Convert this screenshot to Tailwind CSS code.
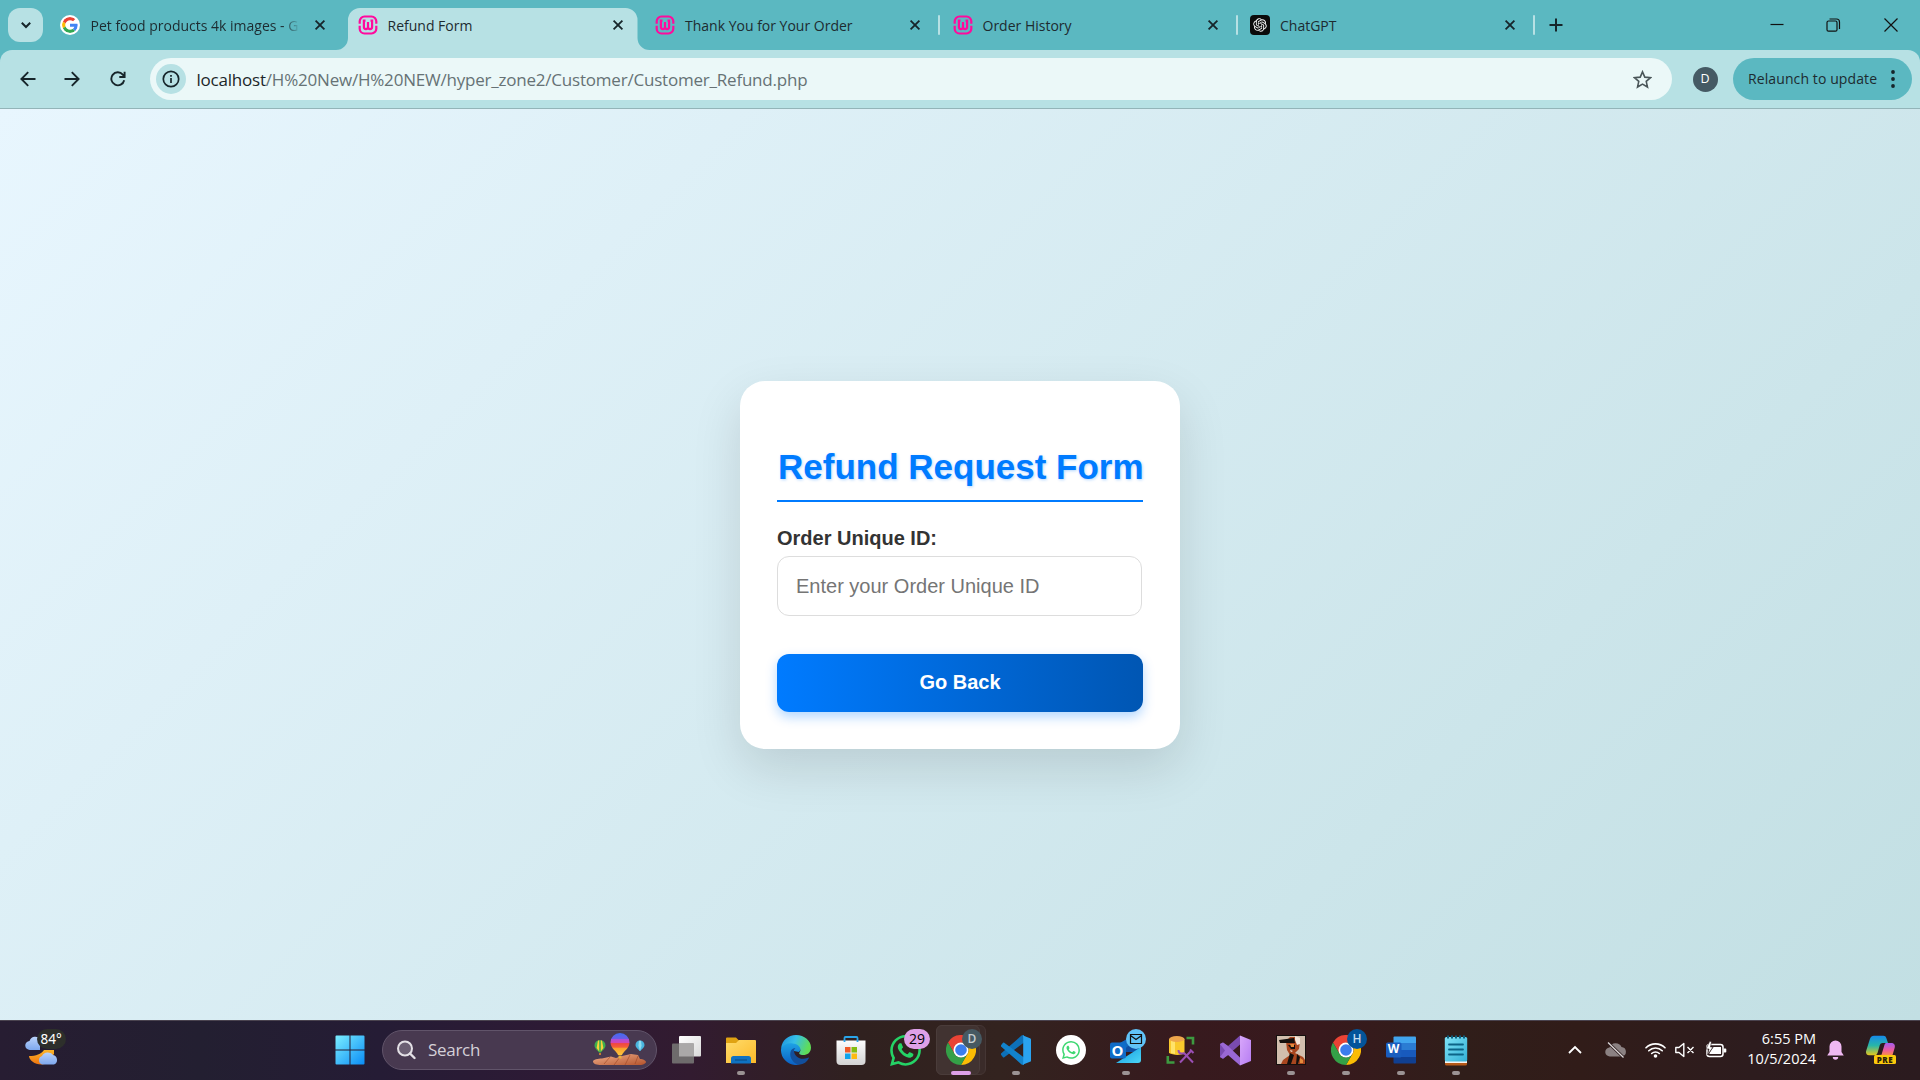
<!DOCTYPE html>
<html lang="en">
<head>
<meta charset="utf-8">
<title>Refund Form</title>
<script src="https://cdn.jsdelivr.net/npm/@tailwindcss/browser@4"></script>
</head>
<body class="w-[1920px] h-[1080px] overflow-hidden flex flex-col font-['Open_Sans',sans-serif] text-[#1d2b30]">

<svg class="absolute size-0">
  <defs>
    <linearGradient id="win" x1="0" y1="0" x2="1" y2="1"><stop offset="0" stop-color="#7beeff"/><stop offset="1" stop-color="#0a8cf5"/></linearGradient>
    <linearGradient id="tv" x1="0" y1="0" x2="1" y2="1"><stop offset="0" stop-color="#fff"/><stop offset="1" stop-color="#d9d9d9"/></linearGradient>
    <linearGradient id="folder" x1="0" y1="0" x2="1" y2="1"><stop offset="0" stop-color="#ffdc6b"/><stop offset="1" stop-color="#fbb929"/></linearGradient>
    <linearGradient id="edgeA" x1="0" y1="0" x2="1" y2=".3"><stop offset="0" stop-color="#1c8fdc"/><stop offset=".5" stop-color="#36bfe8"/><stop offset="1" stop-color="#5fdc58"/></linearGradient>
    <linearGradient id="edgeB" x1="0" y1="0" x2="0" y2="1"><stop offset="0" stop-color="#1fa6e6"/><stop offset="1" stop-color="#0b60c4"/></linearGradient>
    <linearGradient id="store" x1="0" y1="0" x2="0" y2="1"><stop offset="0" stop-color="#fdfdfd"/><stop offset="1" stop-color="#d3d3d3"/></linearGradient>
    <linearGradient id="vs" x1="0" y1="0" x2="1" y2="1"><stop offset="0" stop-color="#d9a8fb"/><stop offset="1" stop-color="#b67df2"/></linearGradient>
    <linearGradient id="outl" x1="0" y1="0" x2="1" y2="1"><stop offset="0" stop-color="#1496dd"/><stop offset="1" stop-color="#4bd6f7"/></linearGradient>
    <linearGradient id="note" x1="0" y1="0" x2="1" y2="1"><stop offset="0" stop-color="#7fe3f7"/><stop offset="1" stop-color="#33b0d6"/></linearGradient>
    <linearGradient id="copA" x1="0" y1="0" x2="0" y2="1"><stop offset="0" stop-color="#168bea"/><stop offset=".5" stop-color="#28b6a8"/><stop offset="1" stop-color="#e6c61c"/></linearGradient>
    <linearGradient id="copB" x1="0" y1="0" x2="0" y2="1"><stop offset="0" stop-color="#a35cf0"/><stop offset=".6" stop-color="#ee5c9c"/><stop offset="1" stop-color="#f98a4b"/></linearGradient>
    <linearGradient id="balloon" x1="0" y1="0" x2="0" y2="1"><stop offset="0" stop-color="#3f6df0"/><stop offset=".25" stop-color="#6a5de8"/><stop offset=".28" stop-color="#b04fd6"/><stop offset=".45" stop-color="#d246b4"/><stop offset=".48" stop-color="#f0483f"/><stop offset=".65" stop-color="#f4603a"/><stop offset=".68" stop-color="#f9a02c"/><stop offset="1" stop-color="#fcc43c"/></linearGradient>
    <linearGradient id="rock" x1="0" y1="0" x2="1" y2="1"><stop offset="0" stop-color="#f2b08c"/><stop offset="1" stop-color="#b4532c"/></linearGradient>
    <linearGradient id="moon" x1="0" y1="0" x2="0" y2="1"><stop offset="0" stop-color="#fbb62a"/><stop offset="1" stop-color="#f0740f"/></linearGradient>
    <linearGradient id="cloud" x1="0" y1="0" x2="0" y2="1"><stop offset="0" stop-color="#b9d2fa"/><stop offset="1" stop-color="#7ea8ee"/></linearGradient>
    <symbol id="wamp" viewBox="0 0 20 20">
      <g fill="none" stroke="#ff0a9d" stroke-width="2.200">
        <path d="M1.700 8.700V6.300A4.800 4.800 0 0 1 6.500 1.500h7a4.800 4.800 0 0 1 4.800 4.800V8.700M1.700 10.800v2.900a4.800 4.800 0 0 0 4.800 4.800h7a4.800 4.800 0 0 0 4.800-4.800V10.800"/>
        <path d="M7.500 5.600H5.900V12a2.050 2.050 0 0 0 4.100 0V7M10 12a2.050 2.050 0 0 0 4.100 0V5.600h-1.600"/>
      </g>
    </symbol>
    <symbol id="x" viewBox="0 0 12 12"><path d="M1.600 1.600l8.800 8.800M10.400 1.600l-8.800 8.800" stroke="#16252a" stroke-width="1.800" fill="none"/></symbol>
    <symbol id="chrome" viewBox="0 0 30 30">
      <path fill="#ea4335" d="M2 7.500A15 15 0 0 1 28 7.500H15L8.500 18.800z"/>
      <path fill="#fbbc04" d="M28 7.500A15 15 0 0 1 15 30l6.500-11.200A7.500 7.500 0 0 0 15 7.500z"/>
      <path fill="#34a047" d="M2 7.500A15 15 0 0 0 15 30l6.500-11.200A7.500 7.500 0 0 1 8.500 18.800z"/>
      <circle cx="15" cy="15" r="7.500" fill="#fff"/><circle cx="15" cy="15" r="5.800" fill="#3b7ded"/>
    </symbol>
    <symbol id="wa" viewBox="0 0 24 24"><path d="M17.472 14.382c-.297-.149-1.758-.867-2.03-.967-.273-.099-.471-.148-.67.15-.197.297-.767.966-.94 1.164-.173.199-.347.223-.644.075-.297-.15-1.255-.463-2.39-1.475-.883-.788-1.48-1.761-1.653-2.059-.173-.297-.018-.458.13-.606.134-.133.298-.347.446-.52.149-.174.198-.298.298-.497.099-.198.05-.371-.025-.52-.075-.149-.669-1.612-.916-2.207-.242-.579-.487-.5-.669-.51-.173-.008-.371-.01-.57-.01-.198 0-.52.074-.792.372-.272.297-1.04 1.016-1.04 2.479 0 1.462 1.065 2.875 1.213 3.074.149.198 2.096 3.2 5.077 4.487.709.306 1.262.489 1.694.625.712.227 1.36.195 1.871.118.571-.085 1.758-.719 2.006-1.413.248-.694.248-1.289.173-1.413-.074-.124-.272-.198-.57-.347m-5.421 7.403h-.004a9.87 9.87 0 01-5.031-1.378l-.361-.214-3.741.982.998-3.648-.235-.374a9.86 9.86 0 01-1.51-5.26c.001-5.45 4.436-9.884 9.888-9.884 2.64 0 5.122 1.03 6.988 2.898a9.825 9.825 0 012.893 6.994c-.003 5.45-4.437 9.884-9.885 9.884m8.413-18.297A11.815 11.815 0 0012.05 0C5.495 0 .16 5.335.157 11.892c0 2.096.547 4.142 1.588 5.945L.057 24l6.305-1.654a11.882 11.882 0 005.683 1.448h.005c6.554 0 11.89-5.335 11.893-11.893a11.821 11.821 0 00-3.48-8.413z"/></symbol>
  </defs>
</svg>

<!-- Tab strip -->
<header class="h-[50px] shrink-0 bg-[#5bb8c1] flex text-[14px] leading-[20px]">
  <div class="w-[50.5px] pl-2 pt-2 shrink-0">
    <div class="w-[35px] h-[34px] rounded-xl bg-[#b7e1e4] grid place-items-center">
      <svg class="size-[12px]" viewBox="0 0 12 12"><path d="M1.800 3.800L6 8l4.200-4.200" fill="none" stroke="#16252a" stroke-width="2"/></svg>
    </div>
  </div>
  <div class="flex gap-2 pt-[8px]">
    <div class="w-[289.5px] h-[34px] flex items-center pl-[9.5px] pr-[14px]">
      <svg class="size-5 shrink-0 rounded-full bg-white p-[2px]" viewBox="0 0 48 48"><path fill="#EA4335" d="M24 9.5c3.54 0 6.71 1.22 9.21 3.6l6.85-6.85C35.9 2.38 30.47 0 24 0 14.62 0 6.51 5.38 2.56 13.22l7.98 6.19C12.43 13.72 17.74 9.5 24 9.5z"/><path fill="#4285F4" d="M46.98 24.55c0-1.57-.15-3.09-.38-4.55H24v9.02h12.94c-.58 2.96-2.26 5.48-4.78 7.18l7.73 6c4.51-4.18 7.09-10.36 7.09-17.65z"/><path fill="#FBBC05" d="M10.53 28.59c-.48-1.45-.76-2.99-.76-4.59s.27-3.14.76-4.59l-7.98-6.19C.92 16.46 0 20.12 0 24c0 3.88.92 7.54 2.56 10.78l7.97-6.19z"/><path fill="#34A853" d="M24 48c6.48 0 11.93-2.13 15.89-5.81l-7.73-6c-2.15 1.45-4.92 2.3-8.16 2.3-6.26 0-11.57-4.22-13.47-9.91l-7.98 6.19C6.51 42.62 14.62 48 24 48z"/></svg>
      <span class="ml-[10.5px] pt-px w-[209px] overflow-hidden whitespace-nowrap [mask-image:linear-gradient(to_right,black_92%,transparent_100%)]">Pet food products 4k images - G</span>
      <svg class="size-3 ml-auto"><use href="#x"/></svg>
    </div>
    <div class="relative w-[289.5px] h-[34px] flex items-center pl-[10px] pr-[14px]">
      <svg class="absolute -left-3 top-0 w-[314px] h-[42px]" viewBox="0 0 314 42"><path fill="#b7e1e4" d="M0 42a12 12 0 0 0 12-12V12A12 12 0 0 1 24 0H289.500a12 12 0 0 1 12 12V30a12 12 0 0 0 12 12z"/></svg>
      <svg class="relative size-5"><use href="#wamp"/></svg>
      <span class="relative ml-[9.5px] pt-px">Refund Form</span>
      <svg class="relative size-3 ml-auto"><use href="#x"/></svg>
    </div>
    <div class="relative w-[289.5px] h-[34px] flex items-center pl-[9.5px] pr-[14px]">
      <svg class="size-5"><use href="#wamp"/></svg>
      <span class="ml-[10px] pt-px">Thank You for Your Order</span>
      <svg class="size-3 ml-auto"><use href="#x"/></svg>
      <i class="absolute -right-[5px] top-[7px] w-[2px] h-5 rounded bg-[#b7e1e4]"></i>
    </div>
    <div class="relative w-[289.5px] h-[34px] flex items-center pl-[10px] pr-[14px]">
      <svg class="size-5"><use href="#wamp"/></svg>
      <span class="ml-[9.5px] pt-px">Order History</span>
      <svg class="size-3 ml-auto"><use href="#x"/></svg>
      <i class="absolute -right-[5px] top-[7px] w-[2px] h-5 rounded bg-[#b7e1e4]"></i>
    </div>
    <div class="relative w-[289.5px] h-[34px] flex items-center pl-[9px] pr-[14px]">
      <svg class="size-5" viewBox="0 0 40 40"><rect width="40" height="40" rx="8" fill="#0b0b0b"/><g transform="translate(6.500 6.500) scale(1.125)"><path fill="#fff" d="M22.2819 9.8211a5.9847 5.9847 0 0 0-.5157-4.9108 6.0462 6.0462 0 0 0-6.5098-2.9A6.0651 6.0651 0 0 0 4.9807 4.1818a5.9847 5.9847 0 0 0-3.9977 2.9 6.0462 6.0462 0 0 0 .7427 7.0966 5.98 5.98 0 0 0 .511 4.9107 6.051 6.051 0 0 0 6.5146 2.9001A5.9847 5.9847 0 0 0 13.2599 24a6.0557 6.0557 0 0 0 5.7718-4.2058 5.9894 5.9894 0 0 0 3.9977-2.9001 6.0557 6.0557 0 0 0-.7475-7.0729zm-9.022 12.6081a4.4755 4.4755 0 0 1-2.8764-1.0408l.1419-.0804 4.7783-2.7582a.7948.7948 0 0 0 .3927-.6813v-6.7369l2.02 1.1686a.071.071 0 0 1 .038.052v5.5826a4.504 4.504 0 0 1-4.4945 4.4944zm-9.6607-4.1254a4.4708 4.4708 0 0 1-.5346-3.0137l.142.0852 4.783 2.7582a.7712.7712 0 0 0 .7806 0l5.8428-3.3685v2.3324a.0804.0804 0 0 1-.0332.0615L9.74 19.9502a4.4992 4.4992 0 0 1-6.1408-1.6464zM2.3408 7.8956a4.485 4.485 0 0 1 2.3655-1.9728V11.6a.7664.7664 0 0 0 .3879.6765l5.8144 3.3543-2.0201 1.1685a.0757.0757 0 0 1-.071 0l-4.8303-2.7865A4.504 4.504 0 0 1 2.3408 7.872zm16.5963 3.8558L13.1038 8.364 15.1192 7.2a.0757.0757 0 0 1 .071 0l4.8303 2.7913a4.4944 4.4944 0 0 1-.6765 8.1042v-5.6772a.79.79 0 0 0-.407-.667zm2.0107-3.0231l-.142-.0852-4.7735-2.7818a.7759.7759 0 0 0-.7854 0L9.409 9.2297V6.8974a.0662.0662 0 0 1 .0284-.0615l4.8303-2.7866a4.4992 4.4992 0 0 1 6.6802 4.66zM8.3065 12.863l-2.02-1.1638a.0804.0804 0 0 1-.038-.0567V6.0742a4.4992 4.4992 0 0 1 7.3757-3.4537l-.142.0805L8.704 5.459a.7948.7948 0 0 0-.3927.6813zm1.0976-2.3654l2.602-1.4998 2.6069 1.4998v2.9994l-2.5974 1.4997-2.6067-1.4997Z"/></g></svg>
      <span class="ml-[10.5px] pt-px">ChatGPT</span>
      <svg class="size-3 ml-auto"><use href="#x"/></svg>
      <i class="absolute -right-[5px] top-[7px] w-[2px] h-5 rounded bg-[#b7e1e4]"></i>
    </div>
  </div>
  <svg class="w-[14px] h-[14px] mt-[18px] ml-[18.5px]" viewBox="0 0 14 14"><path d="M7 .5v13M.5 7h13" stroke="#16252a" stroke-width="2"/></svg>
  <div class="ml-auto flex h-[50px] items-center">
    <svg class="w-[56px] h-[14px]" viewBox="0 0 56 14"><path d="M21.500 6.500h13" stroke="#111" stroke-width="1.200"/></svg>
    <svg class="w-[57px] h-[14px]" viewBox="0 0 57 14"><g fill="none" stroke="#111" stroke-width="1.200"><rect x="22" y="3" width="10" height="10.200" rx="1.500"/><path d="M24.500 1h7a3 3 0 0 1 3 3v7"/></g></svg>
    <svg class="w-[58px] h-[14px]" viewBox="0 0 58 14"><path d="M22.500 .5l13 13M35.500 .5l-13 13" stroke="#111" stroke-width="1.200"/></svg>
  </div>
</header>

<!-- Toolbar -->
<div class="h-[59px] shrink-0 bg-[#5bb8c1]">
  <div class="h-[59px] rounded-t-xl bg-[#b7e1e4] border-b border-[#93b4b8] flex items-center pl-[20px] pr-2">
    <svg class="size-4" viewBox="0 0 16 16"><path d="M15.500 8H2M8.200 1.200L1.400 8l6.800 6.800" fill="none" stroke="#16252a" stroke-width="1.900"/></svg>
    <svg class="size-4 ml-[28px]" viewBox="0 0 16 16"><path d="M.5 8H14M7.800 1.200L14.600 8l-6.800 6.800" fill="none" stroke="#16252a" stroke-width="1.900"/></svg>
    <svg class="size-4 ml-[29.500px]" viewBox="0 0 16 16"><path d="M14.200 9.200A6.500 6.500 0 1 1 12.800 3.600L14.300 5.400M14.600 .8v5.200H9.300" fill="none" stroke="#16252a" stroke-width="1.900"/></svg>
    <div class="ml-[24.500px] w-[1521.500px] h-[42px] rounded-full bg-[#ebf8f8] flex items-center pl-[6px] pr-[20px]">
      <div class="size-[30px] rounded-full bg-[#b7e1e4] grid place-items-center">
        <svg class="size-[18px]" viewBox="0 0 18 18"><circle cx="9" cy="9" r="7.700" fill="none" stroke="#16252a" stroke-width="1.700"/><path d="M9 8v5M9 5v1.700" stroke="#16252a" stroke-width="1.700"/></svg>
      </div>
      <span class="ml-[10.500px] pt-px text-[17px] tracking-[-0.210px] text-[#667275] whitespace-nowrap"><span class="text-[#1b2629]">localhost</span>/H%20New/H%20NEW/hyper_zone2/Customer/Customer_Refund.php</span>
      <svg class="size-[19px] ml-auto" viewBox="0 0 24 24"><path d="M12 2.300l2.900 6.700 7.300.6-5.500 4.800 1.600 7.100L12 17.800l-6.300 3.700 1.600-7.100L1.800 9.600 9.100 9z" fill="none" stroke="#4a5659" stroke-width="2"/></svg>
    </div>
    <div class="ml-[21px] size-[25px] rounded-full bg-[#455a64] text-white text-[12.500px] grid place-items-center">D</div>
    <div class="ml-auto w-[179.500px] h-[42px] rounded-full bg-[#5bb8c1] flex items-center pl-[15.500px] text-[14px] tracking-[0.100px]">
      <span class="whitespace-nowrap pb-px">Relaunch to update</span>
      <svg class="w-1 h-[18px] ml-auto mr-[17.500px]" viewBox="0 0 4 18"><g fill="#16252a"><circle cx="2" cy="2" r="1.900"/><circle cx="2" cy="9" r="1.900"/><circle cx="2" cy="16" r="1.900"/></g></svg>
    </div>
  </div>
</div>

<!-- Page -->
<main class="h-[911px] shrink-0 flex items-center justify-center bg-[linear-gradient(135deg,#e8f6fe,#c2dfe3)] font-['Liberation_Sans',Arial,sans-serif]">
  <form class="w-[440px] h-[368px] rounded-[25px] bg-white shadow-[0_19px_50px_rgba(0,0,0,0.12)] px-[37px] pt-[62px]">
    <h1 class="h-[59px] border-b-2 border-[#007bff] text-[35px] leading-[47px] font-bold text-[#007bff] whitespace-nowrap text-center pl-px [text-shadow:1px_1px_3px_rgba(0,123,255,0.3)]">Refund Request Form</h1>
    <label class="block mt-[24px] h-[30px] text-[20px] leading-[24px] font-bold text-[#333]">Order Unique ID:</label>
    <input class="block w-[365px] h-[60px] rounded-[12px] border border-[#ddd] px-[18px] pt-px text-[20px] placeholder:text-[#757575]" placeholder="Enter your Order Unique ID">
    <button type="button" class="block mt-[38px] w-[366px] h-[58px] rounded-[12px] bg-[linear-gradient(to_right,#007bff,#0056b3)] text-white text-[20px] font-bold pb-[2px] shadow-[0_5px_12px_rgba(0,123,255,0.3)]">Go Back</button>
  </form>
</main>

<!-- Taskbar -->
<footer class="h-[60px] shrink-0 border-t border-[#4a434f] flex items-center text-white bg-[linear-gradient(to_right,#271d32_0px,#231f31_200px,#251c35_380px,#2e1a35_560px,#321b30_690px,#30211f_860px,#33231f_1000px,#371a1e_1180px,#38191d_1320px,#301e1a_1460px,#311c19_1580px,#2d1c1e_1750px,#2b1b1f_1920px)]">
  <div class="relative w-[334.500px] h-[59px] shrink-0">
    <svg class="absolute left-[25px] top-[6px] w-[42px] h-[40px]" viewBox="0 0 42 40"><path fill="url(#cloud)" d="M5 23a4.500 4.500 0 0 1-.5-9A6 6 0 0 1 15 12v11z"/><path fill="url(#moon)" d="M4 29c7 0 12-2 15-6h10v4L20 37C12 39 4 34 4 29z"/><path fill="url(#cloud)" d="M17 37.500a4.500 4.500 0 0 1 0-8.500 6.500 6.500 0 0 1 11-1 5 5 0 0 1 1 9.500z"/></svg>
    <span class="absolute left-[36.500px] top-[8px] w-[29px] h-[20px] rounded-full bg-[#2d2f2b] text-[13.500px] leading-[20px] pl-[4px] font-['Noto_Sans',sans-serif]">84°</span>
  </div>
  <svg class="size-[30px] shrink-0 mb-px" viewBox="0 0 30 30"><path fill="url(#win)" d="M1.500.5H14.500V14.500H.5V1.500a1 1 0 0 1 1-1zM15.500.5H28.500a1 1 0 0 1 1 1V14.500H15.500zM.5 15.500H14.500V29.500H1.500a1 1 0 0 1-1-1zM15.500 15.500H29.500V28.500a1 1 0 0 1-1 1H15.500z"/></svg>
  <div class="ml-[17.500px] mb-px w-[275px] h-[40px] shrink-0 rounded-full bg-[#483950] border border-[#61546a] flex items-center pl-[13px] pr-[9px]">
    <svg class="size-5" viewBox="0 0 20 20"><circle cx="9" cy="8.500" r="7" fill="#6b5f73" stroke="#e4e1e6" stroke-width="2"/><path d="M14 13.500l4.500 4.500" stroke="#e4e1e6" stroke-width="2.400" stroke-linecap="round"/></svg>
    <span class="ml-[12px] text-[17px] tracking-[-0.300px] text-[#d5d0d8]">Search</span>
    <svg class="ml-auto w-[56px] h-[36px]" viewBox="0 0 56 36">
      <path fill="#3cae4e" d="M9 8a5.500 5.500 0 0 1 5.500 5.500C14.500 17 10.500 19 10 20.500H8C7.500 19 3.500 17 3.500 13.500A5.500 5.500 0 0 1 9 8z"/><path fill="#f5d13b" d="M7 8.500h1.200v11L5.600 16zM11 8.500H9.800v11l2.600-3.500z"/><path fill="#c47b35" d="M8 21h2v2H8z"/>
      <path fill="#49b4dd" d="M49 8.500a4.500 4.500 0 0 1 4.500 4.500c0 3-3.500 4.500-4 6h-1c-.5-1.500-4-3-4-6A4.500 4.500 0 0 1 49 8.500z"/><path fill="#8fdcf0" d="M48 8.700h2l.6 5-1.600 5-1.600-5z"/>
      <path fill="url(#balloon)" d="M29 1a9.500 9.500 0 0 1 9.500 9.500c0 6-6.500 9-7.500 12.500h-4c-1-3.500-7.500-6.500-7.500-12.500A9.500 9.500 0 0 1 29 1z"/>
      <path fill="url(#rock)" d="M2 29.500c0-2 5-3 9-3l9-2 5 1.500 6-2 9-2 7 1 2 4c3 0 6 1.500 6 3s-3 3-6 3H10c-4 0-8-1-8-3.500z"/><path d="M13 32l6-7M23 33l6-8M34 33l5-10M44 32l3-8" stroke="#9c4526" stroke-width="1" opacity=".6"/><path fill="#e9b13c" d="M27.500 23.500h3v3h-3z"/>
    </svg>
  </div>
  <div class="flex items-center h-[59px] ml-[1px] [&>div>svg]:mb-px">
    <!-- Task view -->
    <div class="w-[55px] h-[59px] grid place-items-center"><svg class="size-[30px]" viewBox="0 0 30 30"><rect x="8" y="1" width="22" height="20.500" rx="1" fill="url(#tv)"/><rect x="1" y="8.500" width="22" height="20" rx="1" fill="#6e6b6c"/><path d="M8 8.500h15v13H8z" fill="#aaa8a8"/></svg></div>
    <!-- Explorer -->
    <div class="relative w-[55px] h-[59px] grid place-items-center"><svg class="size-[32px]" viewBox="0 0 32 32"><path fill="#e0a312" d="M1 4.500a1 1 0 0 1 1-1h9l3 3h15v8H1z"/><path fill="url(#folder)" d="M1 9h10l3-3h16a1 1 0 0 1 1 1v22H1z"/><path fill="#0f72c2" d="M6 29.500v-5a2.500 2.500 0 0 1 2.500-2.500h15a2.500 2.500 0 0 1 2.500 2.500v5z"/><path d="M10 26h12" stroke="#0b4f8a" stroke-width="1.200"/></svg><i class="absolute bottom-[5px] w-2 h-1 rounded-full bg-[#9b9394]"></i></div>
    <!-- Edge -->
    <div class="w-[55px] h-[59px] grid place-items-center"><svg class="size-[30px]" viewBox="0 0 30 30"><path fill="url(#edgeB)" d="M0 14.500C.5 9 5.500 6.500 10.500 7 16 7.500 20 10.500 20 14l-2 3-5-1c-2 5 3 10 9 10.500-3 3-6 3.500-8 3.500A15 15 0 0 1 0 14.500z"/><path fill="#124f9c" d="M9.500 17c-1.500 6 3.500 12 8.500 12.700 5-.7 8-2.700 9.700-6.200.8-1.500-.5-1-1.500-.5-6.200 2.500-13.200-1-13.200-7.500.2-1 .8-2 1.500-2.500-2 0-4.500 1.500-5 4z"/><path fill="url(#edgeA)" d="M.2 13C1 5.500 7 0 15 0c8.500 0 15 6 15 12.500 0 5-3.500 7.500-8 7.500-3 0-4.500-1.500-3.500-2.500 2-2 1.500-8-6.500-9C7 7.200 2.500 9.500.2 13z"/></svg></div>
    <!-- Store -->
    <div class="w-[55px] h-[59px] grid place-items-center"><svg class="size-[30px]" viewBox="0 0 30 30"><path fill="url(#store)" d="M.5 5.500h29V26a4 4 0 0 1-4 4h-21a4 4 0 0 1-4-4z"/><path d="M8.500 7V3a1 1 0 0 1 1-1h11a1 1 0 0 1 1 1v4" fill="none" stroke="#2aa5ea" stroke-width="1.800"/><path fill="#f05a28" d="M9 12h5.500v5.500H9z"/><path fill="#84bd11" d="M15.500 12H21v5.500h-5.500z"/><path fill="#10a4ec" d="M9 18.500h5.500V24H9z"/><path fill="#fdba12" d="M15.500 18.500H21V24h-5.500z"/></svg></div>
    <!-- WhatsApp -->
    <div class="relative w-[55px] h-[59px] grid place-items-center"><svg class="size-[31px]" fill="#25d366"><use href="#wa"/></svg><span class="absolute left-[26px] top-[8px] w-[26px] h-5 rounded-full bg-[#dea0e8] text-black text-[14px] leading-5 text-center">29</span></div>
    <!-- Chrome, profile D -->
    <div class="relative w-[55px] h-[59px] grid place-items-center"><i class="absolute left-[3px] top-[4px] w-[50px] h-[50px] rounded-md bg-[#3a2b29] border border-[#453634]"></i><i class="absolute left-[3px] top-[4px] w-[44px] h-[50px] rounded-md bg-[#413331] border border-[#4a3c3a]"></i><svg class="relative size-[30px]"><use href="#chrome"/></svg><span class="absolute left-[29px] top-[8px] size-5 rounded-full bg-[#465962] text-[#c5cdd1] text-[12px] font-semibold leading-5 text-center">D</span><i class="absolute bottom-[5px] w-5 h-1 rounded-full bg-[#dea0e8]"></i></div>
    <!-- VS Code -->
    <div class="relative w-[55px] h-[59px] grid place-items-center"><svg class="size-[30px]" viewBox="0 0 30 30"><path fill="#0d70b8" d="M0 19.800a1 1 0 0 1 0-1.300L20.500.6 23 0v7.500L3.300 22.300a1 1 0 0 1-1.300 0z"/><path fill="#1283cc" d="M0 10.200a1 1 0 0 0 0 1.300L20.500 29.400 23 30v-7.500L3.300 7.700a1 1 0 0 0-1.300 0z"/><path fill="#2aa3f0" d="M21.500.3L29 3.200a1.500 1.500 0 0 1 1 1.400v20.800a1.500 1.500 0 0 1-1 1.400l-7.500 2.900c.5-.5.700-1 .7-1.700V2c0-.7-.2-1.300-.7-1.700z"/></svg><i class="absolute bottom-[5px] w-2 h-1 rounded-full bg-[#9b9394]"></i></div>
    <!-- WhatsApp web -->
    <div class="w-[55px] h-[59px] grid place-items-center"><div class="size-[30px] mb-px rounded-full bg-white grid place-items-center"><svg class="size-[18px]" fill="#3fd872"><use href="#wa"/></svg></div></div>
    <!-- Outlook -->
    <div class="relative w-[55px] h-[59px] grid place-items-center"><svg class="size-[32px]" viewBox="0 0 32 32"><path fill="#0f4fa4" d="M6 12L20 3l11 9v6H6z"/><path fill="#1668bd" d="M8 10L21 3l3 4-14 12z"/><path fill="url(#outl)" d="M6 29l25-16v13a3 3 0 0 1-3 3z"/><rect x="0" y="8.500" width="16" height="16" rx="2" fill="#0f6cc8"/></svg><span class="absolute left-[12px] top-[19px] w-[15px] text-[15px] leading-[20px] font-bold text-white text-center">O</span><svg class="absolute left-[28px] top-[8px] size-5" viewBox="0 0 20 20"><circle cx="10" cy="10" r="10" fill="#60c3f8"/><path d="M4.500 5.500h11v9h-11zM4.500 6.500l5.500 4 5.500-4" fill="none" stroke="#111" stroke-width="1.200"/></svg><i class="absolute bottom-[5px] w-2 h-1 rounded-full bg-[#9b9394]"></i></div>
    <!-- SQL Server Management Studio -->
    <div class="w-[55px] h-[59px] grid place-items-center"><svg class="size-[30px]" viewBox="0 0 30 30"><path fill="#f9c92c" d="M3 4h15.500v14c-4 3-12 2-15.500 0z"/><path fill="#ffe36b" d="M5 5h4v14l-4-1z"/><ellipse cx="10.800" cy="4" rx="7.700" ry="3" fill="#eda64c"/><path d="M20.500 3h6.500v6.500M1.800 21v6.500H8.500" fill="none" stroke="#3d9a40" stroke-width="2.600"/><path d="M14 27.500L25 16M18 18l9 9.500M24 14.500l3.500 3.500M12.500 15c0 4 3 4 6 3" fill="none" stroke="#9a4fb5" stroke-width="2"/></svg></div>
    <!-- Visual Studio -->
    <div class="w-[55px] h-[59px] grid place-items-center"><svg class="size-[31px]" viewBox="0 0 31 31"><path fill="#7a4bb0" d="M0 9l3-1.500 5 3.500L20 .5v9L8 20l-5 4-3-2z"/><path fill="#9a68d4" d="M0 22l3 1.500L8 20l12 10.500v-8L8 11 3 7.500 0 9l5 6.500z"/><path fill="url(#vs)" d="M20 .5L31 5v21l-11 4.500z"/></svg></div>
    <!-- Game -->
    <div class="relative w-[55px] h-[59px] grid place-items-center"><svg class="size-[30px]" viewBox="0 0 30 30"><rect width="30" height="30" fill="#15100e"/><rect x="1" y="1" width="28" height="28" fill="#d2bfae"/><path fill="#a8461f" d="M10 6l4-4h7l3 4-1 8-4 4 8 4 2 3v4H5l2-4 7-5-3-5z"/><path fill="#14100e" d="M3 5l15-2 1 5H9L4 8zM12 10h7v4h-4zM14 18l4 2-3 9h-4zM21 19l3 3-2 7h-2z"/><path fill="#f3e7da" d="M19 1l5 2v6l-3 1-2-5zM14 15l3 1-2 1z"/><path fill="#e38a3c" d="M14 9h4v3h-3zM24 23l3 2v3h-3z"/></svg><i class="absolute bottom-[5px] w-2 h-1 rounded-full bg-[#9b9394]"></i></div>
    <!-- Chrome, profile H -->
    <div class="relative w-[55px] h-[59px] grid place-items-center"><svg class="size-[30px]"><use href="#chrome"/></svg><span class="absolute left-[29px] top-[8px] size-5 rounded-full bg-[#03549a] text-[#c8dcee] text-[12px] font-semibold leading-5 text-center">H</span><i class="absolute bottom-[5px] w-2 h-1 rounded-full bg-[#9b9394]"></i></div>
    <!-- Word -->
    <div class="relative w-[55px] h-[59px] grid place-items-center"><svg class="size-[30px]" viewBox="0 0 30 30"><path fill="#41a5ee" d="M7.500 2.500a1 1 0 0 1 1-1H29a1 1 0 0 1 1 1V8H7.500z"/><path fill="#2b7cd3" d="M7.500 8H30v7H7.500z"/><path fill="#185abd" d="M7.500 15H30v7H7.500z"/><path fill="#103f91" d="M7.500 22H30v5.500a1 1 0 0 1-1 1H8.500a1 1 0 0 1-1-1z"/><rect x="0" y="7.500" width="15.500" height="15" rx="1.500" fill="#1a5dbe"/></svg><span class="absolute left-[13px] top-[19px] w-[15px] text-[12px] leading-[18px] font-bold text-center">W</span><i class="absolute bottom-[5px] w-2 h-1 rounded-full bg-[#9b9394]"></i></div>
    <!-- Notepad -->
    <div class="relative w-[55px] h-[59px] grid place-items-center"><svg class="w-[24px] h-[31px]" viewBox="0 0 24 31"><path fill="#b65a1a" d="M1 26h22v3a1.500 1.500 0 0 1-1.500 1.500h-19A1.500 1.500 0 0 1 1 29z"/><path fill="#f4f4f4" d="M1 25h22v3H1z"/><rect x=".8" y="2" width="22.400" height="24.500" rx="1.500" fill="url(#note)"/><path d="M4 .5v3M8 .5v3M12 .5v3M16 .5v3M20 .5v3" stroke="#0f5d7b" stroke-width="2"/><path d="M5 9.500h14M5 14.500h14M5 19.500h14" stroke="#0c6488" stroke-width="1.800" stroke-linecap="round"/></svg><i class="absolute bottom-[5px] w-2 h-1 rounded-full bg-[#9b9394]"></i></div>
  </div>
  <div class="ml-auto flex items-center h-[59px] pb-[2px]">
    <svg class="w-[14px] h-[10px]" viewBox="0 0 14 10"><path d="M1 8l6-6 6 6" fill="none" stroke="#fff" stroke-width="1.800"/></svg>
    <svg class="ml-[23px] w-[22px] h-[18px]" viewBox="0 0 22 18"><path d="M5 15.500a4.500 4.500 0 0 1-.5-9 6.500 6.500 0 0 1 12-.5 4.800 4.800 0 0 1 .5 9.500z" fill="#8b8182"/><path d="M3 1.500l15.500 15" stroke="#2d1c1e" stroke-width="3"/><path d="M3 1.500l15.500 15" stroke="#ddd8d8" stroke-width="1.300"/></svg>
    <svg class="ml-[18px] w-[21px] h-[16px]" viewBox="0 0 21 16"><g fill="none" stroke="#fff" stroke-width="1.600" stroke-linecap="round"><path d="M1 5.800a13.400 13.400 0 0 1 19 0M3.800 8.800a9.500 9.500 0 0 1 13.400 0M6.700 11.500a5.400 5.400 0 0 1 7.600 0"/></g><circle cx="10.500" cy="14" r="1.800" fill="#fff"/></svg>
    <svg class="ml-[9px] w-[20px] h-[16px]" viewBox="0 0 20 16"><path d="M.8 5.500H4L8.800 1.500v13L4 10.500H.8zM12.500 5l6 6M18.500 5l-6 6" fill="none" stroke="#fff" stroke-width="1.400" stroke-linejoin="round"/></svg>
    <svg class="ml-[11px] w-[21px] h-[18px]" viewBox="0 0 21 18"><rect x="1" y="3.500" width="16" height="12" rx="2.500" fill="none" stroke="#fff" stroke-width="1.500"/><path d="M7.500 6h7.500v7H3.500v-1zM17.500 7.500h2a.8.8 0 0 1 .8.8v2.400a.8.8 0 0 1-.8.800h-2z" fill="#fff"/><path d="M3.800 0L0 8h3l-1.500 6L7 6H4.500L5.500 1z" fill="#fff" stroke="#2d1c1e" stroke-width=".6"/></svg>
    <div class="ml-[14px] w-[75px] text-right text-[14.500px] leading-[20px] pb-px whitespace-nowrap flex flex-col items-end"><div>6:55 PM</div><div>10/5/2024</div></div>
    <svg class="ml-[11px] w-[17px] h-[20px]" viewBox="0 0 17 20"><path d="M8.500.5a6 6 0 0 1 6 6V12l2.300 3.500H.2L2.500 12V6.500a6 6 0 0 1 6-6zM5.800 17h5.400a2.700 2.700 0 0 1-5.400 0z" fill="#efb8f2"/></svg>
    <div class="relative ml-[22px] mr-[24px] w-[30px] h-[30px]">
      <svg class="size-[30px]" viewBox="0 0 30 30"><path fill="url(#copA)" d="M8 .8h9.500a3 3 0 0 1 2.800 2.200L22 8h-5.500a3 3 0 0 0-2.700 2L11.500 18a3 3 0 0 1-3 2.200H3c-2.500 0-3.500-2-2.800-4.500L4 3.800C4.700 2 6 .8 8 .8z"/><path fill="url(#copB)" d="M20.500 8H25c3 0 4.500 2 3.700 4.700L26.500 20H12l3.500-.2 3-10C18.900 8.600 19.500 8 20.500 8z"/></svg>
      <span class="absolute left-[8px] top-[20px] w-[22px] h-[9px] rounded-[1.500px] bg-[#fbc80c] text-[#2a1c08] text-[8px] leading-[9px] font-extrabold tracking-[0.500px] text-center">PRE</span>
    </div>
  </div>
</footer>
</body>
</html>
